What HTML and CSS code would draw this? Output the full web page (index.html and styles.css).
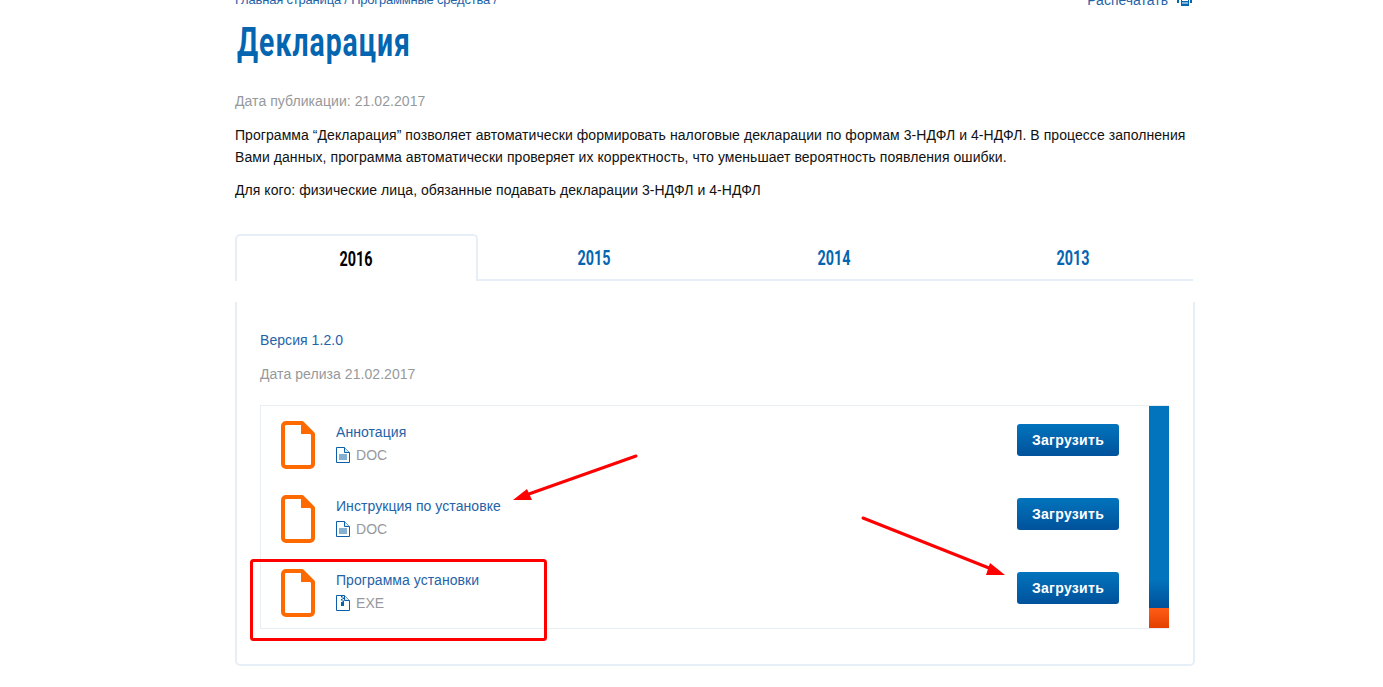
FILE: index.html
```html
<!DOCTYPE html>
<html lang="ru">
<head>
    <meta charset="utf-8">
    <title>Декларация</title>
    <link rel="stylesheet" href="styles.css">
</head>
<body>
<div class="page">
    <div class="topline">
        <div class="crumbs">Главная страница / Программные средства /</div>
        <a class="print">Распечатать
            <svg class="print-icon" width="16" height="12" viewBox="0 0 16 12"><path d="M0 3h2v6H0zM13 3h2v6h-2z" fill="#0465b0"/><path d="M4 3h8v9H4z" fill="#0465b0"/><path d="M5 6.500h6M5 9h6" stroke="#fff" stroke-width="1"/></svg>
        </a>
    </div>
    <h1 class="title"><span>Декларация</span></h1>
    <p class="date">Дата публикации: 21.02.2017</p>
    <p class="text">Программа “Декларация” позволяет автоматически формировать налоговые декларации по формам 3-НДФЛ и 4-НДФЛ. В процессе заполнения Вами данных, программа автоматически проверяет их корректность, что уменьшает вероятность появления ошибки.</p>
    <p class="text who">Для кого: физические лица, обязанные подавать декларации 3-НДФЛ и 4-НДФЛ</p>

    <div class="tabs">
        <div class="tab active"><span>2016</span></div>
        <div class="tab"><span>2015</span></div>
        <div class="tab"><span>2014</span></div>
        <div class="tab"><span>2013</span></div>
    </div>

    <div class="panel">
        <a class="version">Версия 1.2.0</a>
        <p class="release">Дата релиза 21.02.2017</p>
        <div class="files">
            <div class="file-list">
                <div class="file">
                    <svg class="file-icon" width="34" height="48" viewBox="0 0 34 48"><path d="M5 2h16l11 11v30a3 3 0 0 1-3 3H5a3 3 0 0 1-3-3V5a3 3 0 0 1 3-3z" fill="#fff" stroke="#ff6a00" stroke-width="4" stroke-linejoin="round"/><path d="M20 1l13 12H20z" fill="#ff6a00"/></svg>
                    <div class="file-info">
                        <a class="file-name">Аннотация</a>
                        <div class="file-type">
                            <svg class="type-icon" width="14" height="16" viewBox="0 0 14 16"><path d="M.5.500h8l5 5v10H.500z" fill="#fff" stroke="#0c5ea8"/><path d="M8.500.500v5h5" fill="#d7e8f5" stroke="#0c5ea8"/><path d="M3 8h8M3 10h8M3 12h8" stroke="#0c5ea8"/></svg>
                            DOC
                        </div>
                    </div>
                    <a class="load">Загрузить</a>
                </div>
                <div class="file">
                    <svg class="file-icon" width="34" height="48" viewBox="0 0 34 48"><path d="M5 2h16l11 11v30a3 3 0 0 1-3 3H5a3 3 0 0 1-3-3V5a3 3 0 0 1 3-3z" fill="#fff" stroke="#ff6a00" stroke-width="4" stroke-linejoin="round"/><path d="M20 1l13 12H20z" fill="#ff6a00"/></svg>
                    <div class="file-info">
                        <a class="file-name">Инструкция по установке</a>
                        <div class="file-type">
                            <svg class="type-icon" width="14" height="16" viewBox="0 0 14 16"><path d="M.5.500h8l5 5v10H.500z" fill="#fff" stroke="#0c5ea8"/><path d="M8.500.500v5h5" fill="#d7e8f5" stroke="#0c5ea8"/><path d="M3 8h8M3 10h8M3 12h8" stroke="#0c5ea8"/></svg>
                            DOC
                        </div>
                    </div>
                    <a class="load">Загрузить</a>
                </div>
                <div class="file">
                    <svg class="file-icon" width="34" height="48" viewBox="0 0 34 48"><path d="M5 2h16l11 11v30a3 3 0 0 1-3 3H5a3 3 0 0 1-3-3V5a3 3 0 0 1 3-3z" fill="#fff" stroke="#ff6a00" stroke-width="4" stroke-linejoin="round"/><path d="M20 1l13 12H20z" fill="#ff6a00"/></svg>
                    <div class="file-info">
                        <a class="file-name">Программа установки</a>
                        <div class="file-type">
                            <svg class="type-icon" width="14" height="16" viewBox="0 0 14 16"><path d="M.5.500h8l5 5v10H.500z" fill="#fff" stroke="#0c5ea8"/><path d="M8.500.500v5h5" fill="#d7e8f5" stroke="#0c5ea8"/><path d="M5 1h1.500v1.500H5zM6.500 2.500H8V4H6.500zM5 4h1.500v1.500H5zM6.500 5.500H8V7H6.500zM5 7h3v4H5z" fill="#0c5ea8"/></svg>
                            EXE
                        </div>
                    </div>
                    <a class="load">Загрузить</a>
                </div>
            </div>
            <div class="scroll"><div class="scroll-thumb"></div></div>
        </div>
    </div>
</div>

<!-- red marks drawn over the screenshot -->
<svg class="marks" width="1383" height="687" viewBox="0 0 1383 687">
    <rect x="251.500" y="560.500" width="294" height="79" rx="2" fill="none" stroke="#f00" stroke-width="3"/>
    <path d="M636 456L526 495" stroke="#f00" stroke-width="3" stroke-linecap="round" fill="none"/>
    <path d="M513 500L527 489L532 500z" fill="#f00"/>
    <path d="M863 518L994 570" stroke="#f00" stroke-width="3" stroke-linecap="round" fill="none"/>
    <path d="M1005 575L986 575L990 563z" fill="#f00"/>
</svg>
</body>
</html>
```

FILE: styles.css
```css
html, body {
    height: 100%;
    overflow: hidden;
}

body {
    margin: 0;
    background-color: #fff;
    font-family: "Liberation Sans", Arial, sans-serif;
    font-size: 14px;
    line-height: 22px;
    letter-spacing: .06px;
    color: #111;
}

a {
    color: #2563a8;
}

p {
    margin: 0;
}

.page {
    width: 960px;
    margin: -11px 0 0 235px;
}

.topline {
    display: flex;
    justify-content: space-between;
    width: 958px;
    height: 22px;
    font-size: 13px;
    letter-spacing: -.2px;
    color: #2563a8;
}

.print {
    display: flex;
    align-items: center;
    gap: 9px;
    font-size: 14px;
    letter-spacing: 0;
}

.title {
    margin: 3px 0 0;
    height: 56px;
    font-family: Roboto, sans-serif;
    font-size: 41px;
    line-height: 56px;
    font-weight: 700;
    color: #0465b0;
}

.title span {
    display: inline-block;
    transform: scaleX(.69);
    transform-origin: left;
    margin-left: 2px;
    letter-spacing: 1.500px;
}

.date {
    margin-top: 20px;
    color: #96999c;
}

.text {
    width: 958px;
    margin-top: 12px;
}

.who {
    margin-top: 11px;
}

.tabs {
    display: flex;
    width: 958px;
    height: 47px;
    margin-top: 33px;
    box-sizing: border-box;
    border-bottom: 2px solid #e6eff7;
}

.tab {
    width: 239.500px;
    height: 47px;
    box-sizing: border-box;
    display: flex;
    align-items: center;
    justify-content: center;
    font-family: Roboto, sans-serif;
    font-size: 20px;
    font-weight: 700;
    color: #0465b0;
}

.tab span {
    display: inline-block;
    transform: scaleX(.72);
}

.tab.active {
    width: 243px;
    margin-right: -3.500px;
    border: 2px solid #e6eff7;
    border-bottom: none;
    border-radius: 5px 5px 0 0;
    background-color: #fff;
    color: #000;
}

.panel {
    height: 364px;
    margin-top: 21px;
    box-sizing: border-box;
    padding: 27px 24px 0 23px;
    border: 2px solid #e6eff7;
    border-top: none;
    border-radius: 0 0 5px 5px;
}

.version {
    display: block;
}

.release {
    margin-top: 12px;
    color: #96999c;
}

.files {
    display: flex;
    height: 224px;
    margin-top: 20px;
    box-sizing: border-box;
    border: 1px solid #e8eef2;
    border-right: none;
}

.file-list {
    flex: 1;
}

.file {
    display: flex;
    align-items: flex-start;
    height: 74px;
    padding: 15px 30px 0 20px;
    box-sizing: border-box;
}

.file-icon {
    flex: none;
}

.file-info {
    flex: 1;
    margin-left: 21px;
}

.file-name {
    display: block;
}

.file-type {
    display: flex;
    align-items: center;
    gap: 6px;
    margin-top: 1px;
    color: #96999c;
}

.load {
    width: 102px;
    height: 32px;
    margin-top: 3px;
    border-radius: 3px;
    background: linear-gradient(#0274bd, #00529b);
    color: #fff;
    font-weight: 700;
    letter-spacing: .3px;
    line-height: 32px;
    text-align: center;
}

.scroll {
    position: relative;
    width: 20px;
    background: linear-gradient(#0274bd 78%, #00529b 90%);
}

.scroll-thumb {
    position: absolute;
    left: 0;
    right: 0;
    bottom: 0;
    height: 20px;
    background: linear-gradient(#ff5d16, #e34000);
}

.marks {
    position: absolute;
    left: 0;
    top: 0;
}
```
